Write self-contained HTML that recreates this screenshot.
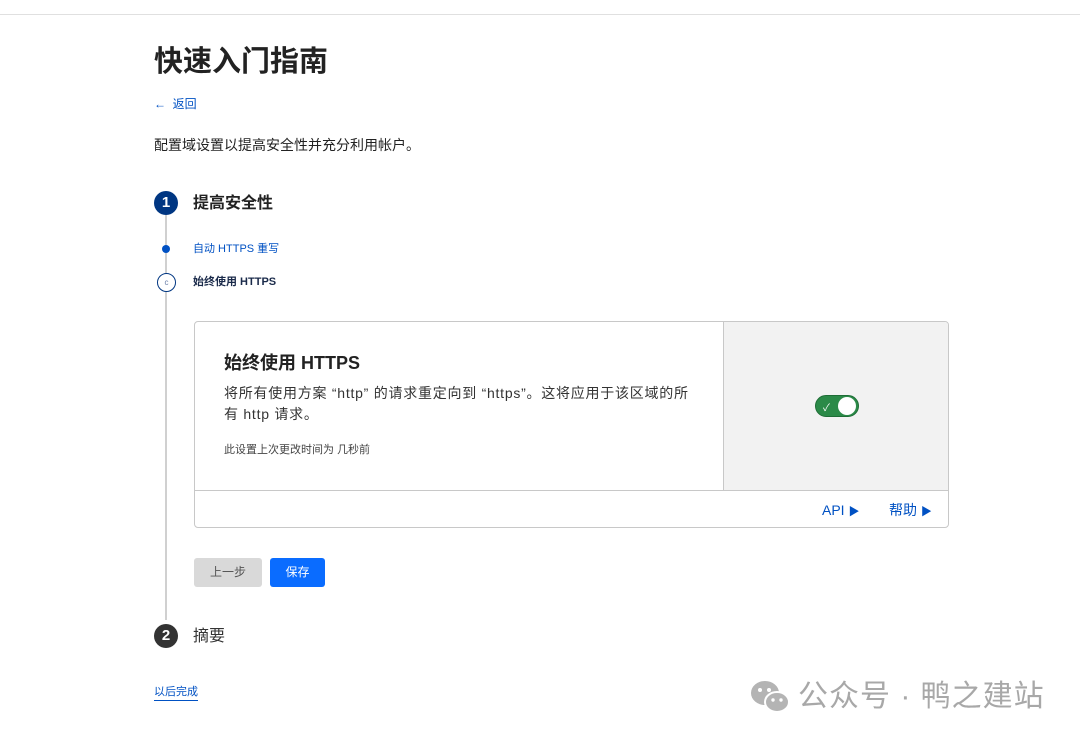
<!DOCTYPE html>
<html><head><meta charset="utf-8"><style>
*{margin:0;padding:0;box-sizing:border-box}
body{width:1080px;height:741px;background:#fff;position:relative;overflow:hidden;font-family:"Liberation Sans","Noto Sans CJK SC",sans-serif;color:#222}
.a{position:absolute;white-space:nowrap}
</style></head><body>
<div class="a" style="left:0;top:14px;width:1080px;height:1px;background:#e0e0e0"></div>
<div class="a" style="left:154px;top:42px;font-size:29px;font-weight:bold;color:#222;line-height:40px">快速入门指南</div>
<div class="a" style="left:154px;top:96px;font-size:12px;color:#0051c3;line-height:16px">←&nbsp;&nbsp;返回</div>
<div class="a" style="left:154px;top:135px;font-size:14px;color:#222;line-height:20px">配置域设置以提高安全性并充分利用帐户。</div>
<div class="a" style="left:165px;top:215px;width:2px;height:405px;background:#d0d0d0"></div>
<div class="a" style="left:154px;top:191px;width:24px;height:24px;border-radius:50%;background:#003682;color:#fff;font-weight:bold;font-size:15px;text-align:center;line-height:24px">1</div>
<div class="a" style="left:193px;top:193px;font-size:16px;font-weight:bold;color:#222;line-height:22px">提高安全性</div>
<div class="a" style="left:162px;top:245px;width:8px;height:8px;border-radius:50%;background:#0051c3"></div>
<div class="a" style="left:193px;top:241px;font-size:11px;color:#0051c3;line-height:16px">自动 HTTPS 重写</div>
<div class="a" style="left:157px;top:273px;width:19px;height:19px;border-radius:50%;border:1px solid #003682;background:#fff;font-size:8px;color:#6b7fa8;text-align:center;line-height:17px">c</div>
<div class="a" style="left:193px;top:274px;font-size:11px;font-weight:bold;color:#1a2a4a;line-height:16px">始终使用 HTTPS</div>
<div class="a" style="left:194px;top:321px;width:755px;height:207px;border:1px solid #c8c8c8;border-radius:4px;overflow:hidden">
 <div class="a" style="left:528px;top:0;width:227px;height:168px;background:#f2f2f2;border-left:1px solid #c8c8c8"></div>
 <div class="a" style="left:0;top:168px;width:755px;height:1px;background:#c8c8c8"></div>
 <div class="a" style="left:29px;top:29px;font-size:18px;font-weight:bold;color:#222;line-height:24px">始终使用 HTTPS</div>
 <div class="a" style="left:29px;top:61px;font-size:14px;color:#333;line-height:21px;letter-spacing:0.75px">将所有使用方案 “http” 的请求重定向到 “https”。这将应用于该区域的所<br>有 http 请求。</div>
 <div class="a" style="left:29px;top:120px;font-size:11px;color:#444;line-height:16px">此设置上次更改时间为 几秒前</div>
 <div class="a" style="left:620px;top:73px;width:44px;height:22px;border-radius:11px;background:#2b8a48;border:1px solid #1e6d36">
  <div class="a" style="left:7px;top:3px;font-size:10px;color:#fff">✓</div>
  <div class="a" style="left:22px;top:1px;width:18px;height:18px;border-radius:50%;background:#fff"></div>
 </div>
 <div class="a" style="left:627px;top:179px;font-size:14px;color:#0051c3;line-height:18px">API <span style="font-size:11px">▶</span></div>
 <div class="a" style="left:694px;top:179px;font-size:14px;color:#0051c3;line-height:18px">帮助 <span style="font-size:11px">▶</span></div>
</div>
<div class="a" style="left:194px;top:558px;width:68px;height:29px;border-radius:3px;background:#d9d9d9;color:#555;font-size:12px;text-align:center;line-height:29px">上一步</div>
<div class="a" style="left:270px;top:558px;width:55px;height:29px;border-radius:3px;background:#0a6cff;color:#fff;font-size:12px;text-align:center;line-height:29px">保存</div>
<div class="a" style="left:154px;top:624px;width:24px;height:24px;border-radius:50%;background:#333;color:#fff;font-weight:bold;font-size:15px;text-align:center;line-height:24px">2</div>
<div class="a" style="left:193px;top:626px;font-size:16px;color:#333;line-height:22px">摘要</div>
<div class="a" style="left:154px;top:685px;font-size:11px;color:#0051c3;line-height:15px;border-bottom:1px solid #0051c3">以后完成</div>
<svg class="a" style="left:750px;top:680px" width="42" height="34" viewBox="0 0 42 34"><ellipse cx="15" cy="13" rx="14" ry="12" fill="#b4b4b4"/><ellipse cx="27" cy="22" rx="12" ry="10" fill="#b4b4b4" stroke="#fff" stroke-width="2"/><circle cx="10" cy="10" r="2" fill="#fff"/><circle cx="19" cy="10" r="2" fill="#fff"/><circle cx="23" cy="20" r="1.7" fill="#fff"/><circle cx="31" cy="20" r="1.7" fill="#fff"/></svg>
<div class="a" style="left:798px;top:679px;font-size:30px;color:#a8a8a8;line-height:36px;letter-spacing:1px">公众号 · 鸭之建站</div>
</body></html>
